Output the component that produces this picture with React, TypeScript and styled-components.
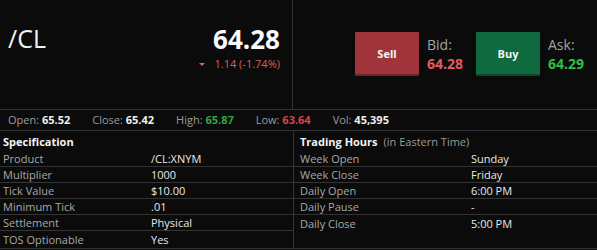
import { FC } from 'react'
import styled, { createGlobalStyle } from 'styled-components'

const Global = createGlobalStyle`
	html, body {
		margin: 0;
		padding: 0;
		background: #0b0b0b;
	}
	body {
		font-family: "Open Sans", "Liberation Sans", sans-serif;
		color: #e6e6e6;
		width: 597px;
		height: 250px;
		overflow: hidden;
	}
`

const Page = styled.div`
	width: 597px;
	height: 250px;
	background: #0b0b0b;
	display: flex;
	flex-direction: column;
`

const Top = styled.div`
	height: 110px;
	display: flex;
	border-bottom: 1px solid #333;
	box-sizing: border-box;
`

const Quote = styled.div`
	width: 294px;
	box-sizing: border-box;
	border-right: 1px solid #333;
	padding: 26px 12px 0 8px;
	display: flex;
	justify-content: space-between;
`

const Symbol = styled.div`
	font-size: 25px;
	line-height: 1;
	color: #f2f2f2;
`

const PriceBox = styled.div`
	display: flex;
	flex-direction: column;
	align-items: flex-end;
`

const Price = styled.div`
	font-size: 26px;
	font-weight: 700;
	line-height: 1;
	color: #fafafa;
`

const Change = styled.div`
	margin-top: 5px;
	font-size: 11px;
	line-height: 14px;
	color: #d8605f;
	display: flex;
	align-items: center;
	gap: 10px;
`

const Caret = styled.span`
	width: 0;
	height: 0;
	border-left: 3px solid transparent;
	border-right: 3px solid transparent;
	border-top: 3px solid #d8605f;
`

const Trade = styled.div`
	flex: 1;
	display: flex;
	align-items: center;
	padding-left: 62px;
	padding-bottom: 1px;
`

const OrderButton = styled.div<{ $bg: string; $edge: string }>`
	width: 64px;
	height: 44px;
	box-sizing: border-box;
	background: ${p => p.$bg};
	border-bottom: 2px solid ${p => p.$edge};
	border-radius: 1px;
	display: flex;
	align-items: center;
	justify-content: center;
	font-size: 11px;
	font-weight: 700;
	color: #f4f4f4;
`

const BidAsk = styled.div`
	width: 49px;
	padding-left: 8px;
	display: flex;
	flex-direction: column;
	line-height: 19px;
`

const BidLabel = styled.span`
	font-size: 14px;
	color: #a3a3a3;
`

const BidValue = styled.span<{ $color: string }>`
	font-size: 14px;
	font-weight: 700;
	color: ${p => p.$color};
`

const Stats = styled.div`
	height: 21px;
	box-sizing: border-box;
	border-bottom: 1px solid #333;
	display: flex;
	align-items: center;
	gap: 22px;
	padding: 0 0 1px 8px;
	font-size: 11px;
`

const Stat = styled.span`
	color: #9c9c9c;
	white-space: nowrap;
`

const StatValue = styled.b<{ $color?: string }>`
	font-weight: 700;
	color: ${p => p.$color ?? '#f0f0f0'};
`

const Bottom = styled.div`
	display: flex;
	height: 117px;
	border-bottom: 1px solid #333;
`

const Panel = styled.div<{ $width: number; $divider?: boolean }>`
	width: ${p => p.$width}px;
	box-sizing: border-box;
	border-right: ${p => (p.$divider ? '1px solid #333' : 'none')};
	font-size: 11px;
`

const Heading = styled.div<{ $indent: number }>`
	height: 20px;
	display: flex;
	align-items: center;
	padding-left: ${p => p.$indent}px;
	font-weight: 700;
	color: #f4f4f4;
	white-space: nowrap;
`

const HeadingNote = styled.span`
	font-weight: 400;
	color: #9c9c9c;
	margin-left: 6px;
`

const Row = styled.div<{ $indent: number; $valueAt: number; $last?: boolean }>`
	height: 16px;
	box-sizing: border-box;
	border-bottom: ${p => (p.$last ? 'none' : '1px solid #333')};
	display: grid;
	grid-template-columns: ${p => p.$valueAt - p.$indent}px 1fr;
	align-items: center;
	padding-left: ${p => p.$indent}px;
	line-height: 15px;
`

const Label = styled.span`
	color: #a8a8a8;
`

const Value = styled.span`
	color: #e8e8e8;
`

const spec = [
	['Product', '/CL:XNYM'],
	['Multiplier', '1000'],
	['Tick Value', '$10.00'],
	['Minimum Tick', '.01'],
	['Settlement', 'Physical'],
	['TOS Optionable', 'Yes'],
]

const hours = [
	['Week Open', 'Sunday'],
	['Week Close', 'Friday'],
	['Daily Open', '6:00 PM'],
	['Daily Pause', '-'],
	['Daily Close', '5:00 PM'],
]

const Side: FC<{ label: string; value: string; color: string }> = ({ label, value, color }) => (
	<BidAsk>
		<BidLabel>{label}</BidLabel>
		<BidValue $color={color}>{value}</BidValue>
	</BidAsk>
)

export default function App() {
	return (
		<Page>
			<Global />
			<Top>
				<Quote>
					<Symbol>/CL</Symbol>
					<PriceBox>
						<Price>64.28</Price>
						<Change><Caret />1.14 (-1.74%)</Change>
					</PriceBox>
				</Quote>
				<Trade>
					<OrderButton $bg="#a1343a" $edge="#6e2428">Sell</OrderButton>
					<Side label="Bid:" value="64.28" color="#e35a5c" />
					<OrderButton $bg="#0f6a3f" $edge="#0b4a2c">Buy</OrderButton>
					<Side label="Ask:" value="64.29" color="#2fbf48" />
				</Trade>
			</Top>
			<Stats>
				<Stat>Open: <StatValue>65.52</StatValue></Stat>
				<Stat>Close: <StatValue>65.42</StatValue></Stat>
				<Stat>High: <StatValue $color="#35a447">65.87</StatValue></Stat>
				<Stat>Low: <StatValue $color="#d8444c">63.64</StatValue></Stat>
				<Stat>Vol: <StatValue>45,395</StatValue></Stat>
			</Stats>
			<Bottom>
				<Panel $width={294} $divider>
					<Heading $indent={3}>Specification</Heading>
					{spec.map(([k, v], i) => (
						<Row key={k} $indent={3} $valueAt={151} $last={i === spec.length - 1}>
							<Label>{k}</Label>
							<Value>{v}</Value>
						</Row>
					))}
				</Panel>
				<Panel $width={303}>
					<Heading $indent={6}>
						Trading Hours<HeadingNote>(in Eastern Time)</HeadingNote>
					</Heading>
					{hours.map(([k, v], i) => (
						<Row key={k} $indent={6} $valueAt={177} $last={i === hours.length - 1}>
							<Label>{k}</Label>
							<Value>{v}</Value>
						</Row>
					))}
				</Panel>
			</Bottom>
		</Page>
	)
}
